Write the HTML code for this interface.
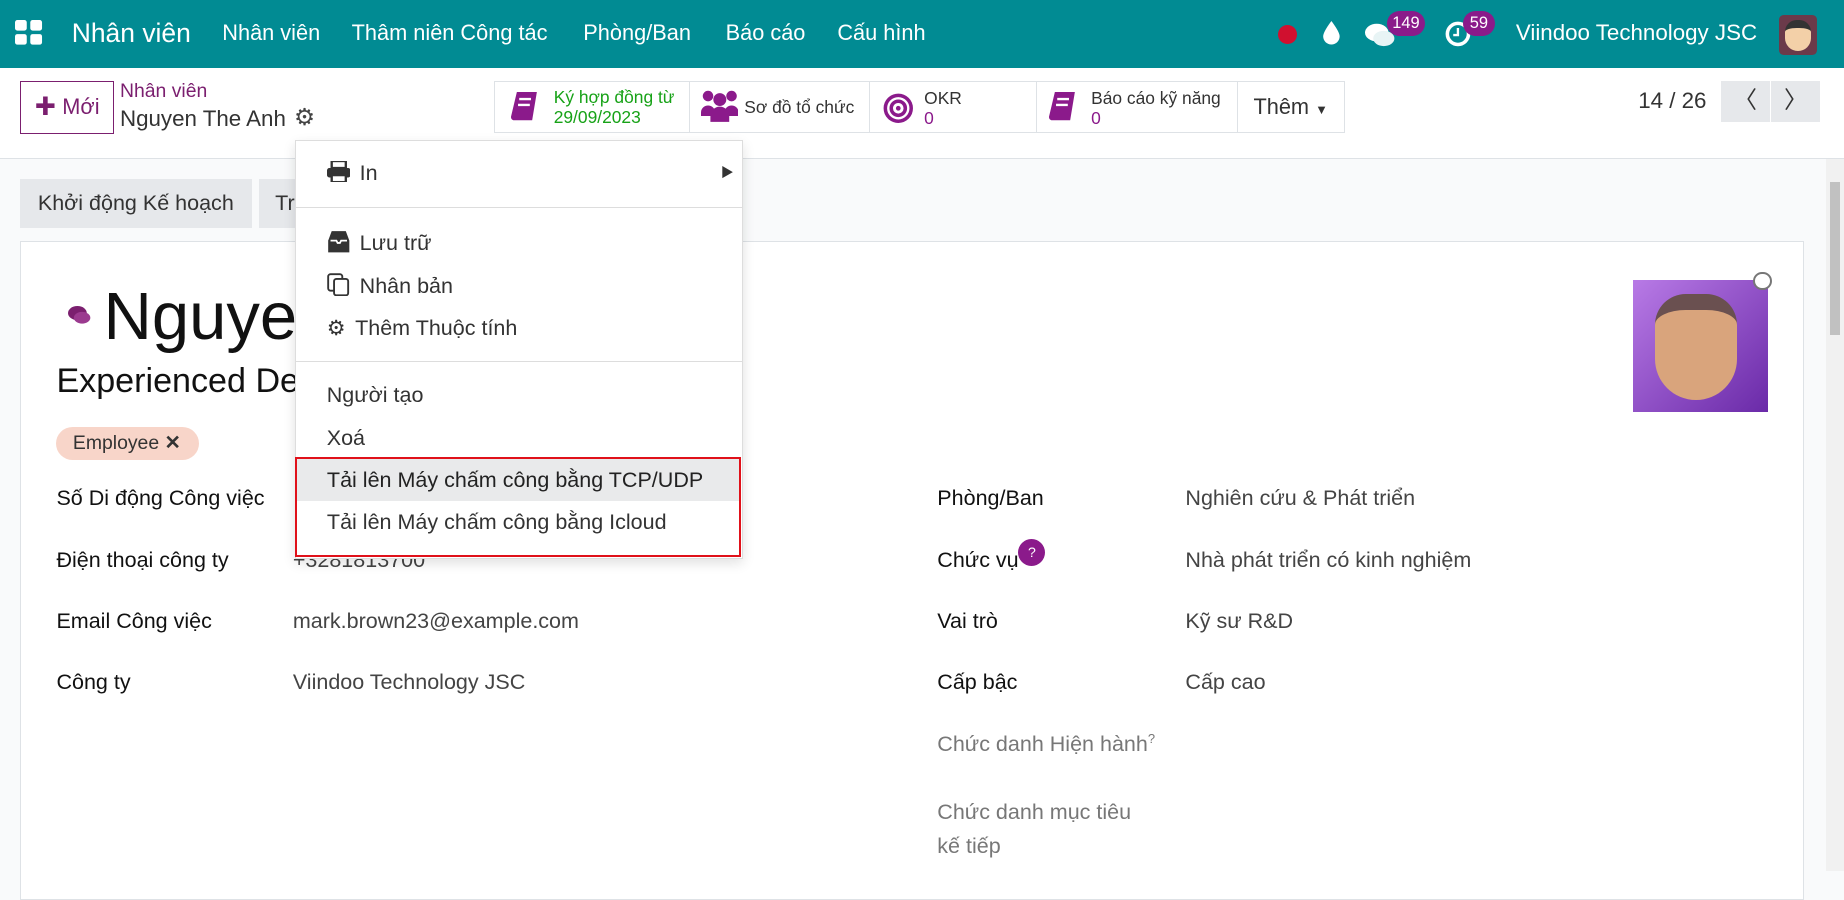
<!DOCTYPE html>
<html><head><meta charset="utf-8">
<style>
html{zoom:1.17602}
*{box-sizing:border-box;margin:0;padding:0}
body{width:1568px;height:741px;overflow:hidden;font-family:"Liberation Sans","Noto Sans CJK SC",sans-serif;background:#f9fafb;position:relative;color:#212529;font-size:18.3px}
.abs{position:absolute}
.nav{left:0;top:0;width:1568px;height:58px;background:#018b93;color:#fff}
.nav span{position:absolute;top:17px;font-size:18.5px}
.cp{left:0;top:58px;width:1568px;height:77px;background:#fff;border-bottom:1px solid #dee2e6}
.btnb{border:1px solid #dee2e6;height:44px;top:69px;background:#fff}
.sm{font-size:14.8px;line-height:17px}
.sheet{left:17px;top:205px;width:1517px;height:560px;background:#fff;border:1px solid #dee2e6}
.lbl{position:absolute;font-size:18.3px;color:#111}
.val{position:absolute;font-size:18.3px;color:#444}
.dd{left:251px;top:119px;width:381px;height:356px;background:#fff;border:1px solid #ddd;box-shadow:0 4px 10px rgba(0,0,0,.12)}
.dd div{position:absolute;left:26px;font-size:18.3px;color:#333}
.dd hr{position:absolute;left:0;width:379px;border:0;border-top:1px solid #ddd}
</style></head><body>
<div class="abs nav">
  <svg class="abs" style="left:13px;top:17px" width="24" height="22" viewBox="0 0 24 22"><rect x="0" y="0" width="10" height="9" rx="2" fill="#fff"/><rect x="13" y="0" width="10" height="9" rx="2" fill="#fff"/><rect x="0" y="12" width="10" height="9" rx="2" fill="#fff"/><rect x="13" y="12" width="10" height="9" rx="2" fill="#fff"/></svg>
  <span style="left:61px;top:15px;font-size:22.5px">Nhân viên</span>
  <span style="left:189px">Nhân viên</span>
  <span style="left:299px">Thâm niên Công tác</span>
  <span style="left:496px">Phòng/Ban</span>
  <span style="left:617px">Báo cáo</span>
  <span style="left:712px">Cấu hình</span>
  <div class="abs" style="left:1087px;top:21px;width:16px;height:16px;border-radius:50%;background:#d0102f"></div>
  <svg class="abs" style="left:1124px;top:18px" width="16" height="20" viewBox="0 0 16 20"><path d="M8 0C8 0 1 9 1 13a7 7 0 0014 0C15 9 8 0 8 0z" fill="#fff"/></svg>
  <svg class="abs" style="left:1161px;top:19px" width="26" height="22" viewBox="0 0 26 22"><ellipse cx="10" cy="9" rx="10" ry="7.5" fill="#fff"/><ellipse cx="16" cy="14" rx="9" ry="6.5" fill="#e8f4f5"/></svg>
  <div class="abs" style="left:1179px;top:9px;width:33px;height:22px;border-radius:11px;background:#8a1b8a;font-size:14px;text-align:center;line-height:22px">149</div>
  <svg class="abs" style="left:1229px;top:18px" width="22" height="22" viewBox="0 0 22 22"><circle cx="11" cy="11" r="9" fill="none" stroke="#fff" stroke-width="3"/><path d="M11 6v6h-4" stroke="#fff" stroke-width="2" fill="none"/></svg>
  <div class="abs" style="left:1244px;top:9px;width:27px;height:22px;border-radius:11px;background:#8a1b8a;font-size:14px;text-align:center;line-height:22px">59</div>
  <span style="left:1289px;font-size:19px">Viindoo Technology JSC</span>
  <div class="abs" style="left:1513px;top:13px;width:32px;height:34px;border-radius:4px;background:#6b3a4a"><div style="margin:4px 5px;width:22px;height:26px;border-radius:10px 10px 11px 11px;background:#f3d0a8;border-top:7px solid #333"></div></div>
</div>
<div class="abs cp"></div>
<div class="abs" style="left:17px;top:69px;width:80px;height:45px;border:1px solid #7b1f6f;background:#fff;color:#7b1f6f;font-size:18.5px;line-height:43px;text-align:center"><b>✚</b> Mới</div>
<div class="abs" style="left:102px;top:68px;color:#7b1f6f;font-size:16.5px">Nhân viên</div>
<div class="abs" style="left:102px;top:90px;font-size:19px;color:#333">Nguyen The Anh</div>
<div class="abs" style="left:250px;top:88px;font-size:20px;color:#444">⚙</div>
<div class="abs btnb" style="left:420px;width:167px"><svg class="abs" style="left:14px;top:8px" width="22" height="27" viewBox="0 0 22 27"><path d="M5 0h17l-4 24H2a3 3 0 01-2-3z" fill="#8b1a8b"/><path d="M7 6h10M6 11h10" stroke="#fff" stroke-width="2"/></svg><div class="abs sm" style="left:50px;top:4px;color:#17a217">Ký hợp đồng từ<br>29/09/2023</div></div>
<div class="abs btnb" style="left:586px;width:154px"><svg class="abs" style="left:9px;top:6px" width="32" height="30" viewBox="0 0 32 30"><circle cx="6" cy="6" r="4.5" fill="#8b1a8b"/><circle cx="26" cy="6" r="4.5" fill="#8b1a8b"/><circle cx="16" cy="9" r="5.5" fill="#8b1a8b"/><path d="M0 20a6 6 0 0112 0v3H0zM20 20a6 6 0 0112 0v3H20zM8 28v-5a8 8 0 0116 0v5z" fill="#8b1a8b"/></svg><div class="abs sm" style="left:46px;top:13px;color:#333">Sơ đồ tổ chức</div></div>
<div class="abs btnb" style="left:739px;width:143px"><svg class="abs" style="left:11px;top:9px" width="26" height="26" viewBox="0 0 26 26"><circle cx="13" cy="13" r="11" fill="none" stroke="#8b1a8b" stroke-width="3"/><circle cx="13" cy="13" r="6" fill="none" stroke="#8b1a8b" stroke-width="3"/><circle cx="13" cy="13" r="2" fill="#8b1a8b"/></svg><div class="abs sm" style="left:46px;top:5px;color:#333">OKR<br><span style="color:#8b1a8b">0</span></div></div>
<div class="abs btnb" style="left:881px;width:172px"><svg class="abs" style="left:10px;top:8px" width="22" height="27" viewBox="0 0 22 27"><path d="M5 0h17l-4 24H2a3 3 0 01-2-3z" fill="#8b1a8b"/><path d="M7 6h10M6 11h10" stroke="#fff" stroke-width="2"/></svg><div class="abs sm" style="left:46px;top:5px;color:#333">Báo cáo kỹ năng<br><span style="color:#8b1a8b">0</span></div></div>
<div class="abs btnb" style="left:1052px;width:92px"><div class="abs" style="left:13px;top:10px;font-size:18.5px;color:#333">Thêm <span style="font-size:11px">▼</span></div></div>
<div class="abs" style="left:1393px;top:75px;font-size:19px;color:#333">14 / 26</div>
<div class="abs" style="left:1463px;top:69px;width:42px;height:35px;background:#e6e8eb;text-align:center;line-height:34px;font-size:20px;color:#333">〈</div>
<div class="abs" style="left:1506px;top:69px;width:42px;height:35px;background:#e6e8eb;text-align:center;line-height:34px;font-size:20px;color:#333">〉</div>

<div class="abs" style="left:17px;top:152px;width:197px;height:42px;background:#e6e8eb;font-size:18.3px;line-height:42px;text-align:center;color:#333">Khởi động Kế hoạch</div>
<div class="abs" style="left:220px;top:152px;width:60px;height:42px;background:#e6e8eb;font-size:18.3px;line-height:42px;padding-left:14px;color:#333">Tr</div>

<div class="abs sheet"></div>
<svg class="abs" style="left:58px;top:260px" width="20" height="17" viewBox="0 0 20 17"><ellipse cx="8" cy="6" rx="8" ry="6" fill="#7b1f6f"/><ellipse cx="12" cy="10" rx="7" ry="5" fill="#9b3a8f"/></svg>
<div class="abs" style="left:88px;top:236px;font-size:57px;color:#111">Nguyen</div>
<div class="abs" style="left:48px;top:308px;font-size:29px;color:#111">Experienced De</div>
<div class="abs" style="left:48px;top:363px;width:121px;height:28px;border-radius:14px;background:#f8d5c9;font-size:16.5px;line-height:28px;padding-left:14px;color:#333">Employee <b>✕</b></div>

<div class="lbl" style="left:48px;top:413px">Số Di động Công việc</div>
<div class="lbl" style="left:48px;top:466px">Điện thoại công ty</div><div class="val" style="left:249px;top:466px">+3281813700</div>
<div class="lbl" style="left:48px;top:518px">Email Công việc</div><div class="val" style="left:249px;top:518px">mark.brown23@example.com</div>
<div class="lbl" style="left:48px;top:570px">Công ty</div><div class="val" style="left:249px;top:570px">Viindoo Technology JSC</div>

<div class="lbl" style="left:797px;top:413px">Phòng/Ban</div><div class="val" style="left:1008px;top:413px">Nghiên cứu &amp; Phát triển</div>
<div class="lbl" style="left:797px;top:466px">Chức vụ</div>
<div class="abs" style="left:866px;top:458px;width:23px;height:23px;border-radius:50%;background:#8b1a8b;color:#fff;font-size:12px;text-align:center;line-height:23px">?</div>
<div class="val" style="left:1008px;top:466px">Nhà phát triển có kinh nghiệm</div>
<div class="lbl" style="left:797px;top:518px">Vai trò</div><div class="val" style="left:1008px;top:518px">Kỹ sư R&amp;D</div>
<div class="lbl" style="left:797px;top:570px">Cấp bậc</div><div class="val" style="left:1008px;top:570px">Cấp cao</div>
<div class="val" style="left:797px;top:622px;color:#777">Chức danh Hiện hành<sup style="font-size:11px">?</sup></div>
<div class="val" style="left:797px;top:676px;color:#777;line-height:29px">Chức danh mục tiêu<br>kế tiếp</div>

<div class="abs" style="left:1389px;top:238px;width:114px;height:112px;background:linear-gradient(135deg,#b87ae6,#6a2aa8)"><div style="margin:12px 0 0 18px;width:70px;height:90px;border-radius:30px 30px 40px 40px;background:#d9a47c;border-top:14px solid #6a5050"></div></div>
<div class="abs" style="left:1491px;top:231px;width:16px;height:16px;border-radius:50%;border:2px solid #777;background:#fff"></div>

<div class="abs" style="left:1553px;top:135px;width:15px;height:606px;background:#f1f1f1"></div>
<div class="abs" style="left:1556px;top:155px;width:9px;height:130px;background:#c1c1c1"></div>

<div class="abs dd">
  <div style="top:17px"><svg width="20" height="18" viewBox="0 0 20 18" style="vertical-align:-2px;margin-right:8px"><rect x="4" y="0" width="12" height="6" fill="none" stroke="#333" stroke-width="2"/><rect x="0" y="6" width="20" height="8" rx="2" fill="#333"/><rect x="4" y="12" width="12" height="6" fill="#fff" stroke="#333" stroke-width="2"/></svg>In</div>
  <div style="left:361px;top:18px;font-size:11px">▶</div>
  <hr style="top:56px">
  <div style="top:76px"><svg width="20" height="20" viewBox="0 0 20 20" style="vertical-align:-3px;margin-right:8px"><path d="M1 9l3-8h12l3 8v10H1z" fill="#333"/><path d="M3 9h5l1 2h2l1-2h5" stroke="#fff" stroke-width="1.5" fill="none"/></svg>Lưu trữ</div>
  <div style="top:112px"><svg width="20" height="20" viewBox="0 0 20 20" style="vertical-align:-3px;margin-right:8px"><rect x="1" y="1" width="12" height="14" rx="2" fill="none" stroke="#333" stroke-width="1.6"/><rect x="6" y="5" width="12" height="14" rx="2" fill="#fff" stroke="#333" stroke-width="1.6"/></svg>Nhân bản</div>
  <div style="top:148px"><span style="margin-right:8px;font-size:18px">⚙</span>Thêm Thuộc tính</div>
  <hr style="top:187px">
  <div style="top:206px">Người tạo</div>
  <div style="top:242px">Xoá</div>
</div>
<div class="abs" style="left:252px;top:390px;width:376px;height:36px;background:#e9eaeb"></div>
<div class="abs" style="left:278px;top:398px;font-size:18.3px;color:#222">Tải lên Máy chấm công bằng TCP/UDP</div>
<div class="abs" style="left:278px;top:434px;font-size:18.3px;color:#333">Tải lên Máy chấm công bằng Icloud</div>
<div class="abs" style="left:251px;top:389px;width:379px;height:85px;border:2px solid #e0111a"></div>
</body></html>
